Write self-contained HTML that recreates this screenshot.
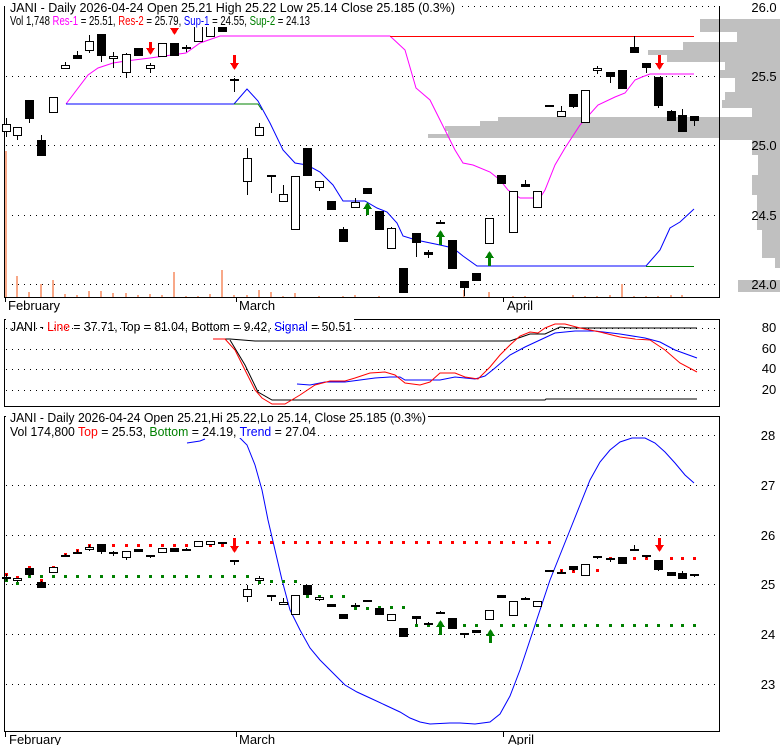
<!DOCTYPE html>
<html><head><meta charset="utf-8"><style>
html,body{margin:0;padding:0;background:#fff;width:780px;height:745px;overflow:hidden}
svg{display:block}
text{font-family:"Liberation Sans",Arial,sans-serif;font-size:13px;fill:#000}
</style></head><body>
<svg id="s" width="780" height="745" viewBox="0 0 780 745" xmlns="http://www.w3.org/2000/svg" shape-rendering="crispEdges">
<g id="bg"></g>
<g id="g1"></g>
<rect x="5" y="0" width="452" height="14" fill="#fff"/>
<rect x="5" y="14" width="308" height="13" fill="#fff"/>
<text x="10" y="12" textLength="445" lengthAdjust="spacingAndGlyphs">JANI - Daily 2026-04-24 Open 25.21  High 25.22  Low 25.14  Close 25.185 (0.3%)</text>
<text x="10" y="25" textLength="300" lengthAdjust="spacingAndGlyphs">Vol 1,748 <tspan fill="#ff00ff">Res-1</tspan> = 25.51, <tspan fill="#ff0000">Res-2</tspan> = 25.79, <tspan fill="#0000ff">Sup-1</tspan> = 24.55, <tspan fill="#008000">Sup-2</tspan> = 24.13</text>
<g id="ax"></g>
<text x="8" y="310">February</text>
<text x="239" y="310">March</text>
<text x="507" y="310">April</text>
<rect x="6" y="313" width="348" height="14" fill="#fff"/>
<text x="10" y="331" textLength="342" lengthAdjust="spacingAndGlyphs">JANI - <tspan fill="#ff0000">Line</tspan> = 37.71, Top = 81.04, Bottom = 9.42, <tspan fill="#0000ff">Signal</tspan> = 50.51</text>
<rect x="6" y="410" width="422" height="14" fill="#fff"/>
<rect x="6" y="424" width="312" height="14" fill="#fff"/>
<text x="10" y="422" textLength="416" lengthAdjust="spacingAndGlyphs">JANI - Daily 2026-04-24 Open 25.21,Hi 25.22,Lo 25.14, Close 25.185 (0.3%)</text>
<text x="10" y="436" textLength="306" lengthAdjust="spacingAndGlyphs">Vol 174,800 <tspan fill="#ff0000">Top</tspan> = 25.53, <tspan fill="#008000">Bottom</tspan> = 24.19, <tspan fill="#0000ff">Trend</tspan> = 27.04</text>
<text x="9" y="744">February</text>
<text x="239" y="744">March</text>
<text x="508" y="744">April</text>
</svg>
<script>
var NS="http://www.w3.org/2000/svg";
function el(p,t,a){var e=document.createElementNS(NS,t);for(var k in a)e.setAttribute(k,a[k]);document.getElementById(p).appendChild(e);return e;}
function R(p,x,y,w,h,f){return el(p,'rect',{x:x,y:y,width:w,height:h,fill:f});}
function L(p,x1,y1,x2,y2,c,d){var a={x1:x1,y1:y1,x2:x2,y2:y2,stroke:c||'#000','stroke-width':1};if(d)a['stroke-dasharray']=d;return el(p,'line',a);}
function PL(p,pts,c){return el(p,'polyline',{points:pts.map(function(q){return q.join(',')}).join(' '),fill:'none',stroke:c,'stroke-width':1,'shape-rendering':'auto'});}
function T(p,x,y,s,anchor){var e=el(p,'text',{x:x,y:y,'text-anchor':anchor||'middle'});e.textContent=s;return e;}
var prof=[[19,32,700],[32,42,737],[42,50,683],[50,55,648],[55,62,667],[62,70,725],[70,78,720],[78,92,735],[92,100,725],[100,108,722],[108,117,752],[117,121,498],[121,126,480],[126,131,445],[131,134,448],[134,138,428],[138,140,719],[140,155,752],[155,175,758],[175,195,752],[195,230,757],[230,258,762],[258,268,775],[280,292,738]];
prof.forEach(function(a){R('bg',a[2],a[0],780-a[2],a[1]-a[0],'#c0c0c0');});
[6,76,145,215,284].forEach(function(y){L('bg',6,y+0.5,719,y+0.5,'#000','1,5');});
L('bg',4.5,6,4.5,297);L('bg',719.5,6,719.5,298);L('bg',4,297.5,720,297.5);
[5,236,503].forEach(function(x){L('bg',x+0.5,297,x+0.5,302);});
var vol=[[6,151],[17,276],[29,292],[41,284],[53,280],[65,294],[77,295],[89,291],[101,291],[113,293],[126,293],[138,295],[150,294],[162,295],[174,272],[186,296],[198,296],[210,294],[222,270],[234,295],[247,295],[259,290],[271,292],[283,296],[295,293],[319,296],[343,296],[355,295],[379,296],[464,290],[489,292],[513,296],[525,296],[573,295],[585,296],[597,296],[610,295],[622,284],[634,296],[646,296],[658,296],[671,295],[682,295]];
vol.forEach(function(v){R('g1',v[0]-1,v[1],2,297-v[1],'#f8a888');});
PL('g1',[[66,104],[88,75],[98,68],[113,63],[126,61],[150,58],[186,53],[200,43],[220,36],[390,36],[405,50],[416,88],[430,100],[445,130],[455,150],[463,163],[473,165],[490,172],[500,180],[508,190],[520,198],[540,198],[545,190],[555,165],[565,148],[580,125],[598,105],[615,97],[625,93],[635,80],[642,77],[650,74],[694,74]],'#ff00ff');
L('g1',390,36.5,694,36.5,'#ff0000');
PL('g1',[[66,104],[234,104],[247,89],[258,101],[270,123],[283,150],[295,163],[307,165],[320,172],[333,185],[343,201],[365,201],[377,208],[387,212],[397,223],[403,236],[416,240],[440,245],[453,248],[463,256],[477,266],[646,266],[660,250],[670,228],[680,222],[694,209]],'#0000ff');
PL('g1',[[234,104],[258,104],[262,110]],'#008000');
L('g1',646,266.5,694,266.5,'#008000');
var C=[[6,124,132,118,137,0],[17,127,136,127,140,0],[29,100,119,100,123,1],[41,140,156,135,156,1],[53,97,113,97,113,0],[65,65,69,62,69,0],[77,55,59,51,59,1],[89,41,51,35,53,0],[101,34,56,34,62,1],[113,56,59,52,68,0],[126,54,73,53,78,0],[138,48,56,48,56,1],[150,65,69,63,73,0],[162,43,57,43,57,0],[174,43,56,43,56,1],[186,47,49,45,52,1],[198,25,42,25,42,0],[210,25,37,25,37,0],[222,27,32,27,32,1],[234,79,81,78,92,0],[247,158,182,148,195,0],[259,127,136,123,136,0],[271,175,177,175,193,1],[283,194,202,185,202,0],[295,176,230,176,230,0],[307,148,176,148,176,1],[319,181,188,181,191,0],[331,201,210,201,210,1],[343,229,242,227,242,1],[355,202,208,198,208,0],[367,188,194,188,194,1],[379,211,230,211,230,1],[391,228,249,227,249,0],[403,268,293,268,293,1],[416,233,243,233,257,1],[428,252,255,250,258,1],[440,222,224,220,224,1],[452,240,269,240,269,1],[464,281,288,281,296,1],[476,273,281,273,281,1],[489,218,244,218,244,0],[501,175,184,175,184,1],[513,191,233,191,233,0],[525,184,187,180,187,1],[537,191,208,191,208,0],[549,105,105,105,105,1],[561,111,117,106,117,0],[573,94,107,94,108,1],[585,90,123,90,123,0],[597,68,71,66,74,0],[610,72,77,72,83,1],[622,70,89,70,89,1],[634,47,53,36,53,1],[646,63,68,63,73,1],[658,77,106,77,108,1],[671,111,121,110,121,1],[682,115,132,109,132,1],[694,116,121,116,126,1]];
function candle(p,c,f){var x=c[0],bt=f(c[1]),bb=f(c[2]),wt=f(c[3]),wb=f(c[4]);
 L(p,x+0.5,wt,x+0.5,wb);
 var h=Math.max(bb-bt,1);
 if(c[5]){R(p,x-4,bt,9,Math.max(h,2),'#000');}
 else{el(p,'rect',{x:x-3.5,y:bt+0.5,width:8,height:Math.max(h-1,1),fill:'#fff',stroke:'#000','stroke-width':1});}
}
var id=function(y){return y;};
C.forEach(function(c){candle('g1',c,id);});
function arrow(p,x,y0,y1,col,down){
 if(down){R(p,x-1,y0,3,(y1-y0)-5,col);el(p,'polygon',{points:(x-4)+','+(y1-7)+' '+(x+5)+','+(y1-7)+' '+(x+0.5)+','+y1,fill:col});}
 else{R(p,x-1,y0+5,3,(y1-y0)-5,col);el(p,'polygon',{points:(x-4)+','+(y0+7)+' '+(x+5)+','+(y0+7)+' '+(x+0.5)+','+y0,fill:col});}
}
arrow('g1',150,42,55,'#ff0000',1);arrow('g1',174,28,35,'#ff0000',1);arrow('g1',234,55,70,'#ff0000',1);arrow('g1',659,55,70,'#ff0000',1);
arrow('g1',367,202,215,'#008000',0);arrow('g1',440,230,245,'#008000',0);arrow('g1',489,251,266,'#008000',0);
[['26.0',11],['25.5',80],['25.0',149],['24.5',219],['24.0',288]].forEach(function(a){T('ax',764,a[1]+1,a[0]);});
L('bg',4,319.5,720,319.5);L('bg',4,406.5,720,406.5);L('bg',4.5,319,4.5,407);L('bg',719.5,319,719.5,407);
[328,349,369,390].forEach(function(y){L('bg',6,y+0.5,719,y+0.5,'#000','1,5');});
[['80',328],['60',349],['40',369],['20',390]].forEach(function(a){T('ax',769,a[1]+4,a[0]);});
PL('g1',[[213,339],[230,339],[255,341],[510,341],[530,334],[545,334],[560,327],[570,328],[697,328]],'#000');
PL('g1',[[230,340],[245,365],[258,392],[272,400],[545,400],[546,399],[697,399]],'#000');
PL('g1',[[297,384],[310,385],[325,382],[345,382],[360,380],[375,378],[390,377],[400,377],[405,380],[440,380],[455,377],[475,379],[485,376],[495,368],[510,355],[525,347],[540,340],[555,333],[575,331],[595,331],[620,334],[645,338],[660,342],[675,350],[697,358]],'#0000ff');
PL('g1',[[213,339],[225,339],[235,350],[245,370],[255,390],[262,398],[272,404],[285,404],[300,395],[315,385],[330,381],[345,381],[355,378],[370,373],[385,372],[395,375],[405,383],[420,385],[430,382],[440,373],[455,373],[465,377],[478,379],[490,367],[500,355],[510,345],[520,336],[530,332],[538,333],[545,328],[555,324],[565,324],[580,328],[600,332],[620,337],[635,339],[650,340],[665,350],[680,363],[697,372]],'#ff0000');
L('bg',4,416.5,720,416.5);L('bg',4,731.5,720,731.5);L('bg',4.5,416,4.5,732);L('bg',719.5,416,719.5,732);
[435,485,535,584,634,684].forEach(function(y){L('bg',6,y+0.5,719,y+0.5,'#000','1,5');});
[5,236,503].forEach(function(x){L('bg',x+0.5,731,x+0.5,737);});
[['28',435],['27',485],['26',535],['25',584],['24',634],['23',684]].forEach(function(a){T('ax',768,a[1]+5,a[0]);});
var f3=function(y){return Math.round(534.6+(y-7)*0.3588);};
PL('g1',[[187,443],[200,441],[205,439]],'#0000ff');
PL('g1',[[238,436],[247,445],[255,465],[262,490],[268,520],[275,550],[282,580],[290,610],[300,630],[310,648],[320,660],[335,675],[345,685],[357,692],[370,698],[385,705],[400,712],[410,718],[420,722],[430,724],[450,723],[460,723],[475,724],[490,722],[500,714],[510,696],[520,670],[530,640],[540,610],[550,580],[560,555],[570,530],[580,505],[590,480],[600,462],[610,450],[620,442],[632,438],[645,438],[655,443],[665,452],[675,463],[685,475],[694,483]],'#0000ff');
var red=[[6,574],[17,577],[29,567],[41,580],[53,567],[65,554],[77,550],[89,545],[101,545],[113,545],[126,545],[138,545],[150,545],[162,545],[174,545],[186,545],[198,545],[210,545],[222,545]];
for(var i=20;i<46;i++)red.push([C[i][0],542]);
red.push([561,570],[573,571],[597,570],[610,558],[622,558],[634,558],[646,558],[671,558],[682,558],[694,558]);
red.forEach(function(d){R('g1',d[0]-1,d[1]-1,3,3,'#ff0000');});
var gr=[[6,580],[17,583]];
for(i=2;i<21;i++)gr.push([C[i][0],576]);
gr.push([259,582],[271,581],[283,581],[295,581],[307,596],[319,596],[331,596],[343,596],[355,608],[367,608],[379,607],[391,607],[403,607]);
for(i=34;i<58;i++){if(i!=36&&i!=40)gr.push([C[i][0],625]);}
gr.forEach(function(d){R('g1',d[0]-1,d[1]-1,3,3,'#008000');});
C.forEach(function(c){candle('g1',c,f3);});
arrow('g1',234,538,553,'#ff0000',1);arrow('g1',659,538,552,'#ff0000',1);
arrow('g1',440,620,635,'#008000',0);arrow('g1',490,629,643,'#008000',0);
var s=document.getElementById('s');var g=document.getElementById('g1');s.insertBefore(g,s.children[2]);
</script>
</body></html>
